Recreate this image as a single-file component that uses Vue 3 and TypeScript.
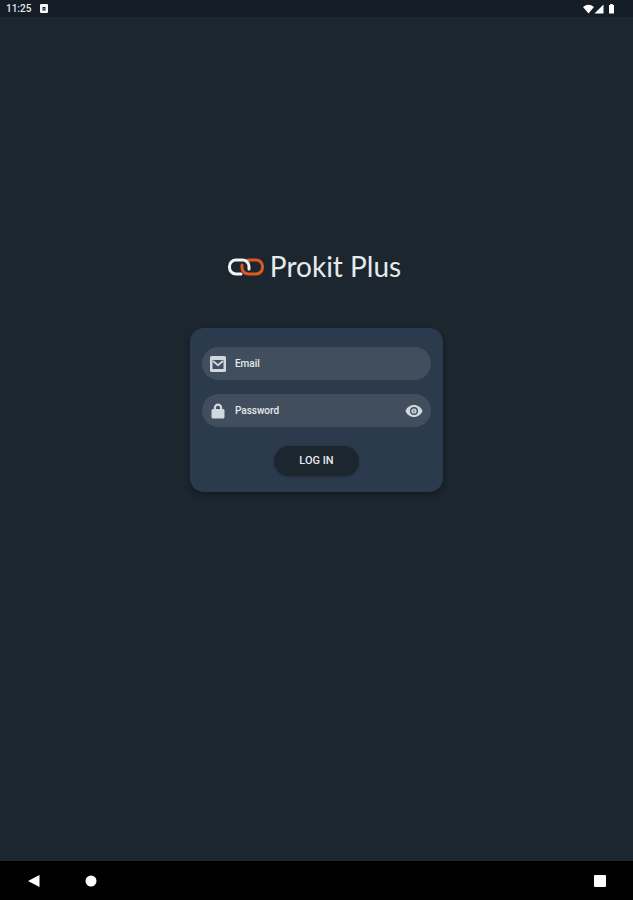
<script setup lang="ts">
import { ref } from 'vue'

const email = ref('')
const password = ref('')
const showPassword = ref(false)
</script>

<template>
  <div class="screen">
    <header class="status-bar">
      <div class="status-group">
        <time class="clock">11:25</time>
        <svg class="notice" viewBox="0 0 8 9" aria-hidden="true">
          <path fill="#f4f6f7" fill-rule="evenodd" d="M1 0h6a1 1 0 0 1 1 1v7a1 1 0 0 1-1 1H1a1 1 0 0 1-1-1V1a1 1 0 0 1 1-1zM2.500 3v3.500h3V3z" />
          <path fill="#c3c8cb" d="M3.500 4h1v1.500h-1z" />
        </svg>
      </div>
      <svg class="signals" viewBox="0 0 32 10" aria-hidden="true">
        <g fill="#fff">
          <path d="M0 3Q5.500-1.500 11 3L5.500 9.500z" />
          <path d="M20.500 0.500v9h-9z" />
          <path d="M26 1h1.200V0h2.600v1H31v8.500h-5z" />
        </g>
      </svg>
    </header>

    <main class="content">
      <h1 class="brand">
        <svg class="brand-mark" viewBox="0 0 36 18" fill="none" stroke-width="3" stroke-linecap="round" aria-hidden="true">
          <path stroke="#e2571e" d="M20 2H28a6.500 6.500 0 0 1 6.500 6.500V9.500A6.500 6.500 0 0 1 28 16H20.500a6.500 6.500 0 0 1-6.500-6.500V7" />
          <path stroke="#f3f4f5" d="M13 16H8a6.500 6.500 0 0 1-6.500-6.500V8.500A6.500 6.500 0 0 1 8 2H14.500a6.500 6.500 0 0 1 6.500 6.500V11" />
        </svg>
        <span>Prokit Plus</span>
      </h1>

      <form class="card" @submit.prevent>
        <div class="field">
          <label for="email" aria-label="Email">
            <svg class="icon" viewBox="0 0 16 16" aria-hidden="true">
              <path fill="#cfd8df" fill-rule="evenodd" d="M1.500 0h13A1.500 1.500 0 0 1 16 1.500v13a1.500 1.500 0 0 1-1.500 1.500h-13A1.500 1.500 0 0 1 0 14.500v-13A1.500 1.500 0 0 1 1.500 0zM2.500 4v9h11V4z" />
              <path fill="none" stroke="#cfd8df" stroke-width="1.800" d="M3 5l5 4.200L13 5" />
            </svg>
          </label>
          <input id="email" v-model="email" type="email" placeholder="Email" />
        </div>

        <div class="field">
          <label for="password" aria-label="Password">
            <svg class="icon" viewBox="0 0 16 16" aria-hidden="true">
              <path fill="#cfd8df" fill-rule="evenodd" d="M3.800 6V4.700a4.200 4.200 0 0 1 8.400 0V6h.8a1.500 1.500 0 0 1 1.500 1.500v6.500A1.500 1.500 0 0 1 13 15.500H3a1.500 1.500 0 0 1-1.500-1.500V7.500A1.500 1.500 0 0 1 3 6zM6 6h4V4.700a2 2 0 0 0-4 0z" />
            </svg>
          </label>
          <input id="password" v-model="password" :type="showPassword ? 'text' : 'password'" placeholder="Password" />
          <button class="reveal" type="button" aria-label="Show password" :aria-pressed="showPassword" @click="showPassword = !showPassword">
            <svg viewBox="0 0 18 12" aria-hidden="true">
              <path fill="#cfd8df" fill-rule="evenodd" d="M9 0c4 0 7.200 2.400 8.500 6C16.200 9.600 13 12 9 12S1.800 9.600.5 6C1.800 2.400 5 0 9 0zM9 2a4 4 0 1 0 0 8 4 4 0 0 0 0-8z" />
              <circle cx="9" cy="6" r="2.600" fill="#cfd8df" />
              <path stroke="#4b5966" d="M9 4.500v3" />
            </svg>
          </button>
        </div>

        <button class="login" type="submit">LOG IN</button>
      </form>
    </main>

    <nav class="nav-bar" aria-label="System navigation">
      <button type="button" aria-label="Back">
        <svg viewBox="0 0 12 12" aria-hidden="true"><path fill="#fff" d="M11.500 0v12L0 6z" /></svg>
      </button>
      <button type="button" aria-label="Home">
        <svg viewBox="0 0 12 12" aria-hidden="true"><circle cx="6" cy="6" r="5.500" fill="#fff" /></svg>
      </button>
      <button class="overview" type="button" aria-label="Overview">
        <svg viewBox="0 0 12 12" aria-hidden="true"><rect width="12" height="12" rx="1" fill="#fff" /></svg>
      </button>
    </nav>
  </div>
</template>

<style>
body {
  margin: 0;
  background: #1c262f;
}
</style>

<style scoped>
.screen {
  display: flex;
  flex-direction: column;
  min-height: 100vh;
  background: #1c262f;
  color: #e6eaed;
  font-family: Roboto, "Liberation Sans", sans-serif;
}

.status-bar {
  display: flex;
  align-items: center;
  justify-content: space-between;
  height: 17px;
  padding: 0 18px 0 6px;
  background: #151d26;
}

.status-group {
  display: flex;
  align-items: center;
  gap: 9px;
}

.clock {
  font-size: 10px;
  font-weight: 500;
  line-height: 17px;
}

.notice {
  width: 8px;
  height: 9px;
}

.signals {
  width: 32px;
  height: 10px;
}

.content {
  display: flex;
  flex: 1;
  flex-direction: column;
  align-items: center;
  gap: 44px;
  padding-top: 232px;
}

.brand {
  display: flex;
  align-items: center;
  gap: 6px;
  margin: 0;
  padding-right: 4px;
  font-family: Lato, "Open Sans", sans-serif;
  font-size: 28px;
  font-weight: 400;
  line-height: 35px;
}

.brand-mark {
  width: 36px;
  height: 18px;
}

.card {
  display: flex;
  flex-direction: column;
  align-items: center;
  gap: 14px;
  box-sizing: border-box;
  width: 40%;
  min-width: 240px;
  padding: 19px 12px 16px;
  border-radius: 14px;
  background: #2b3b4d;
  box-shadow: 0 3px 6px rgba(0, 0, 0, 0.3);
}

.field {
  display: flex;
  align-items: center;
  gap: 9px;
  box-sizing: border-box;
  width: 100%;
  height: 33px;
  padding: 0 8px;
  border-radius: 17px;
  background: #414e5d;
}

.field label,
.icon {
  display: block;
  width: 16px;
  height: 16px;
}

.field input {
  flex: 1;
  min-width: 0;
  padding: 0;
  border: 0;
  outline: 0;
  background: transparent;
  color: #e6eaed;
  font: 500 10px/16px Roboto, "Liberation Sans", sans-serif;
}

.field input::placeholder {
  color: #e6eaed;
  opacity: 1;
}

button {
  padding: 0;
  border: 0;
  background: transparent;
  cursor: pointer;
}

.reveal svg {
  display: block;
  width: 18px;
  height: 12px;
}

.login {
  width: 85px;
  height: 30px;
  margin-top: 5px;
  border-radius: 15px;
  background: #1c262f;
  box-shadow: 0 1px 3px rgba(0, 0, 0, 0.3);
  color: #e6eaed;
  font: 500 11px/16px Roboto, "Liberation Sans", sans-serif;
}

.nav-bar {
  display: flex;
  align-items: center;
  gap: 45px;
  height: 39px;
  padding: 0 27px 0 28px;
  background: #000;
}

.nav-bar svg {
  display: block;
  width: 12px;
  height: 12px;
}

.overview {
  margin-left: auto;
}
</style>
